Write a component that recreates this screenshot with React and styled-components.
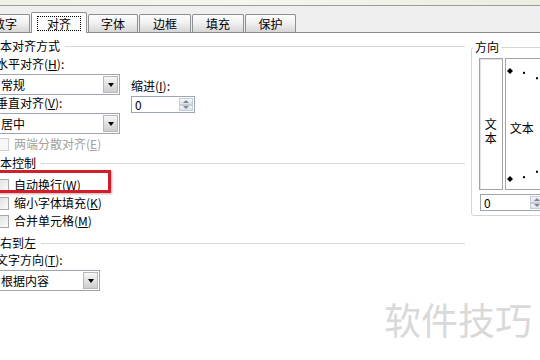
import React from 'react';
import styled, { createGlobalStyle } from 'styled-components';

const colors = {
  border: '#8f8f8f',
  field: '#9da5ae',
  groupLine: '#d8d8d8',
  disabled: '#a0a0a0',
  red: '#cf1f28',
  mark: '#d9d9d9',
};

const GlobalStyle = createGlobalStyle`
  html, body { margin: 0; padding: 0; background: #fff; }
  body {
    font-family: "Noto Sans CJK SC", "Liberation Sans", sans-serif;
    font-size: 12px;
    color: #000;
  }
`;

const Stage = styled.div`
  position: relative;
  width: 540px;
  height: 360px;
  overflow: hidden;
  background: #fff;
`;

const TitleStrip = styled.div`
  height: 5px;
  background: linear-gradient(90deg, #f0f0e4, #f6f6ee 45%, #ececdf);
  border-bottom: 1px solid #9c9c9c;
`;

const TabBar = styled.div`
  height: 26px;
  display: flex;
  align-items: flex-end;
  gap: 1px;
  background: #efefef;
  border-bottom: 1px solid #8c8c8c;
  & > :first-child { margin-left: -20px; }
`;

const Tab = styled.div`
  flex: none;
  box-sizing: border-box;
  width: ${p => p.$w}px;
  height: ${p => (p.$active ? 21 : 18)}px;
  margin-bottom: ${p => (p.$active ? -1 : 0)}px;
  border: 1px solid ${colors.border};
  border-bottom: none;
  border-radius: 2px 2px 0 0;
  background: ${p => (p.$active ? '#fff' : 'linear-gradient(#fdfdfd, #f1f1f1 45%, #d6d6d6)')};
  display: flex;
  align-items: center;
  justify-content: center;
  line-height: 14px;
  position: relative;
  z-index: ${p => (p.$active ? 1 : 0)};
`;

const FocusLabel = styled.span`
  border: 1px dotted #000;
  padding: 0 9px;
  line-height: 13px;
`;

const Body = styled.div`
  display: flex;
  align-items: flex-start;
  gap: 6px;
  margin-left: -12px;
`;

const LeftCol = styled.div`
  flex: none;
  width: 477px;
`;

const GroupTitle = styled.div`
  display: flex;
  align-items: center;
  gap: 5px;
  height: 14px;
  line-height: 14px;
  margin-top: ${p => p.$mt}px;
  &::after {
    content: '';
    flex: 1;
    height: 1px;
    background: ${colors.groupLine};
  }
`;

const Section = styled.div`
  padding-left: 8px;
`;

const AlignRow = styled.div`
  display: flex;
  gap: 11px;
`;

const FieldBlock = styled.div`
  width: 124px;
`;

const IndentBlock = styled.div`
  padding-top: 26px;
`;

const FieldLabel = styled.div`
  height: 14px;
  line-height: 14px;
  margin-top: ${p => p.$mt}px;
  white-space: nowrap;
`;

const Select = styled.div`
  box-sizing: border-box;
  width: ${p => p.$w}px;
  height: 21px;
  margin-top: 3px;
  border: 1px solid ${colors.field};
  background: #fff;
  display: flex;
  align-items: center;
  justify-content: space-between;
  padding: 0 1px 0 4px;
`;

const DropButton = styled.span`
  box-sizing: border-box;
  width: 15px;
  height: 17px;
  border: 1px solid #b8b8b8;
  background: linear-gradient(#f6f6f6, #cdcdcd);
  display: flex;
  align-items: center;
  justify-content: center;
  &::before {
    content: '';
    border-left: 3.5px solid transparent;
    border-right: 3.5px solid transparent;
    border-top: 4px solid #000;
  }
`;

const SpinBox = styled.div`
  box-sizing: border-box;
  width: ${p => p.$w}px;
  height: 17px;
  margin-top: ${p => p.$mt}px;
  margin-left: ${p => p.$ml || 0}px;
  border: 1px solid ${colors.field};
  background: #fff;
  display: flex;
  align-items: center;
  justify-content: space-between;
  padding: 0 1px 0 3px;
  line-height: 13px;
`;

const SpinButtons = styled.span`
  display: flex;
  flex-direction: column;
  width: 14px;
  height: 13px;
`;

const SpinArrow = styled.span`
  flex: 1;
  box-sizing: border-box;
  border: 1px solid #c6ccd4;
  background: linear-gradient(#f4f6f9, #dce2e9);
  display: flex;
  align-items: center;
  justify-content: center;
  &::before {
    content: '';
    border-left: 3px solid transparent;
    border-right: 3px solid transparent;
    ${p => (p.$down ? 'border-top' : 'border-bottom')}: 3px solid #7a8593;
  }
`;

const CheckRow = styled.div`
  position: relative;
  display: flex;
  align-items: center;
  gap: 5px;
  height: 14px;
  line-height: 14px;
  margin-top: ${p => p.$mt}px;
  color: ${p => (p.$disabled ? colors.disabled : '#000')};
  white-space: nowrap;
`;

const CheckBox = styled.span`
  flex: none;
  box-sizing: border-box;
  width: 13px;
  height: 13px;
  border: 1px solid ${p => (p.$disabled ? '#cfcfcf' : '#a8a8a8')};
  background: ${p => (p.$disabled ? '#f7f7f7' : 'linear-gradient(135deg, #dedede, #fbfbfb)')};
`;

const Highlight = styled.span`
  position: absolute;
  left: -12px;
  top: -8px;
  width: 127px;
  height: 23px;
  box-sizing: border-box;
  border: 3px solid ${colors.red};
  box-shadow: 1px 1px 2px rgba(120, 0, 0, 0.35);
  pointer-events: none;
`;

const DirGroup = styled.fieldset`
  flex: none;
  width: 120px;
  min-width: 0;
  margin: 7px 0 0;
  padding: 4px 0 4px 7px;
  border: 1px solid #d5d5d5;
  border-radius: 3px;
`;

const DirLegend = styled.legend`
  padding: 0 2px;
  margin-left: -6px;
  line-height: 14px;
  font-size: 12px;
`;

const DialRow = styled.div`
  display: flex;
  gap: 2px;
  height: 132px;
`;

const VerticalBox = styled.div`
  box-sizing: border-box;
  width: 25px;
  border: 1px solid #a3a3a3;
  box-shadow: inset 1px 1px 0 #e2e2e2;
  display: flex;
  flex-direction: column;
  align-items: center;
  justify-content: center;
  padding-top: 14px;
  font-size: 12px;
  line-height: 14px;
  & > span { display: block; height: 14px; }
`;

const DialBox = styled.div`
  position: relative;
  box-sizing: border-box;
  width: 100px;
  border: 1px solid #a3a3a3;
  display: flex;
  align-items: center;
  padding: 7px 0 0 4px;
  line-height: 14px;
`;

const DialMarks = styled.svg`
  position: absolute;
  left: 0;
  top: 0;
`;

const Watermark = styled.div`
  position: absolute;
  left: 384px;
  top: 297px;
  font-size: 37px;
  line-height: 44px;
  color: ${colors.mark};
  white-space: nowrap;
`;

function Mn({ k }) {
  return <>(<u>{k}</u>)</>;
}

function Spin({ w, mt, ml }) {
  return (
    <SpinBox $w={w} $mt={mt} $ml={ml}>
      <span>0</span>
      <SpinButtons>
        <SpinArrow />
        <SpinArrow $down />
      </SpinButtons>
    </SpinBox>
  );
}

function Dial() {
  const cx = 4;
  const cy = 66;
  const r = 54;
  const marks = [];
  for (let a = -90; a <= 90; a += 15) {
    const rad = (a * Math.PI) / 180;
    const x = cx + r * Math.cos(rad);
    const y = cy + r * Math.sin(rad);
    if (a % 90 === 0) {
      marks.push(
        <polygon key={a} points={`${x},${y - 3} ${x + 3},${y} ${x},${y + 3} ${x - 3},${y}`} fill="#000" />
      );
    } else {
      marks.push(<rect key={a} x={x - 1} y={y - 1} width="2" height="2" fill="#000" />);
    }
  }
  return (
    <DialMarks width="98" height="130" viewBox="0 0 98 130">
      {marks}
    </DialMarks>
  );
}

const tabs = [
  { label: '数字', w: 50 },
  { label: '对齐', w: 56, active: true },
  { label: '字体', w: 50 },
  { label: '边框', w: 52 },
  { label: '填充', w: 52 },
  { label: '保护', w: 51 },
];

export default function App() {
  return (
    <Stage>
      <GlobalStyle />
      <TitleStrip />
      <TabBar>
        {tabs.map(t => (
          <Tab key={t.label} $w={t.w} $active={t.active}>
            {t.active ? <FocusLabel>{t.label}</FocusLabel> : t.label}
          </Tab>
        ))}
      </TabBar>

      <Body>
        <LeftCol>
          <GroupTitle $mt={6}>文本对齐方式</GroupTitle>
          <Section>
            <AlignRow>
              <FieldBlock>
                <FieldLabel $mt={4}>水平对齐<Mn k="H" />:</FieldLabel>
                <Select $w={124}>
                  <span>常规</span>
                  <DropButton />
                </Select>
                <FieldLabel $mt={1}>垂直对齐<Mn k="V" />:</FieldLabel>
                <Select $w={124}>
                  <span>居中</span>
                  <DropButton />
                </Select>
              </FieldBlock>
              <IndentBlock>
                <FieldLabel $mt={0}>缩进<Mn k="I" />:</FieldLabel>
                <Spin w={64} mt={3} />
              </IndentBlock>
            </AlignRow>
            <CheckRow $mt={3} $disabled>
              <CheckBox $disabled />
              <span>两端分散对齐<Mn k="E" /></span>
            </CheckRow>
          </Section>

          <GroupTitle $mt={5}>文本控制</GroupTitle>
          <Section>
            <CheckRow $mt={8}>
              <CheckBox />
              <span>自动换行<Mn k="W" /></span>
              <Highlight />
            </CheckRow>
            <CheckRow $mt={4}>
              <CheckBox />
              <span>缩小字体填充<Mn k="K" /></span>
            </CheckRow>
            <CheckRow $mt={4}>
              <CheckBox />
              <span>合并单元格<Mn k="M" /></span>
            </CheckRow>
          </Section>

          <GroupTitle $mt={8}>从右到左</GroupTitle>
          <Section>
            <FieldLabel $mt={3}>文字方向<Mn k="T" />:</FieldLabel>
            <Select $w={104}>
              <span>根据内容</span>
              <DropButton />
            </Select>
          </Section>
        </LeftCol>

        <DirGroup>
          <DirLegend>方向</DirLegend>
          <DialRow>
            <VerticalBox>
              <span>文</span>
              <span>本</span>
            </VerticalBox>
            <DialBox>
              <Dial />
              <span>文本</span>
            </DialBox>
          </DialRow>
          <Spin w={66} mt={4} ml={1} />
        </DirGroup>
      </Body>

      <Watermark>软件技巧</Watermark>
    </Stage>
  );
}
